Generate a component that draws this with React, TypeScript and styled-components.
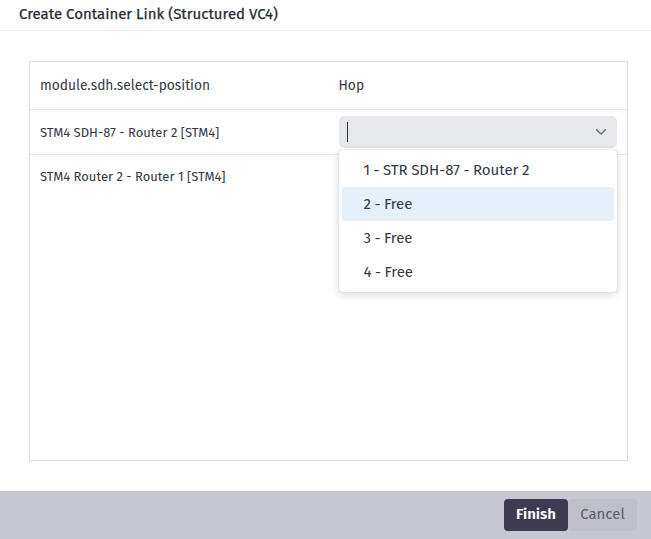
import React from 'react';
import styled, { createGlobalStyle } from 'styled-components';

const GlobalStyle = createGlobalStyle`
  html, body {
    margin: 0;
    padding: 0;
    background: #ffffff;
    font-family: "Fira Sans", "Noto Sans", "Open Sans", sans-serif;
    color: #2e3240;
  }
  * { box-sizing: border-box; }
`;

const Dialog = styled.div`
  width: 651px;
  height: 539px;
  display: flex;
  flex-direction: column;
  background: #fff;
`;

const Header = styled.div`
  height: 31px;
  padding: 0 0 0 19px;
  display: flex;
  align-items: center;
  border-bottom: 1px solid #e9e9ef;
`;

const Title = styled.h1`
  margin: 0 0 3px;
  font-size: 15px;
  font-weight: 400;
  color: #262a36;
  -webkit-text-stroke: 0.25px #262a36;
`;

const Body = styled.div`
  flex: 1;
  padding: 30px 23px 30px 29px;
  display: flex;
`;

const Table = styled.div`
  flex: 1;
  border: 1px solid #dcdde2;
  display: flex;
  flex-direction: column;
`;

const Row = styled.div<{ $height: number; $divider?: boolean }>`
  display: grid;
  grid-template-columns: 1fr 1fr;
  height: ${p => p.$height}px;
  border-bottom: ${p => (p.$divider ? '1px solid #e6e7eb' : 'none')};
`;

const Cell = styled.div<{ $size: number; $top?: number }>`
  padding: ${p => (p.$top !== undefined ? `${p.$top}px 10px 0` : '0 10px')};
  display: flex;
  align-items: ${p => (p.$top !== undefined ? 'flex-start' : 'center')};
  font-size: ${p => p.$size}px;
  color: #343846;
  position: relative;
`;

const SelectBox = styled.div`
  width: 100%;
  height: 32px;
  border-radius: 5px;
  background: #e6e8ec;
  display: flex;
  align-items: center;
  justify-content: space-between;
  padding: 0 10px 0 8px;
`;

const Caret = styled.span`
  width: 1px;
  height: 20px;
  background: #2b2f3b;
`;

const Menu = styled.div`
  position: absolute;
  top: 40px;
  left: 10px;
  right: 10px;
  background: #fff;
  border-radius: 4px;
  padding: 3px;
  box-shadow: 0 2px 8px rgba(40, 44, 60, 0.2), 0 0 1px rgba(40, 44, 60, 0.25);
  z-index: 2;
`;

const Option = styled.div<{ $active?: boolean }>`
  height: 34px;
  display: flex;
  align-items: center;
  padding-left: 22px;
  border-radius: 3px;
  font-size: 15px;
  word-spacing: -0.5px;
  color: #343846;
  background: ${p => (p.$active ? '#e6f0fb' : 'transparent')};
`;

const Footer = styled.div`
  height: 48px;
  background: #c7c7cf;
  display: flex;
  align-items: center;
  justify-content: flex-end;
  padding-right: 14px;
`;

const Button = styled.button<{ $primary?: boolean }>`
  height: 32px;
  border: none;
  border-radius: 4px;
  font-family: inherit;
  font-size: 15px;
  padding: 0 0 2px;
  cursor: pointer;
  background: ${p => (p.$primary ? '#3d3a52' : '#bfbfc8')};
  color: ${p => (p.$primary ? '#ffffff' : '#5d5d70')};
  font-weight: ${p => (p.$primary ? 600 : 400)};
  width: ${p => (p.$primary ? 64 : 69)}px;
`;

const Chevron = () => (
  <svg width="12" height="8" viewBox="0 0 12 8" fill="none">
    <path d="M1.5 1.8 L6 6 L10.5 1.8" stroke="#6b6f7c" strokeWidth="1.5" strokeLinecap="round" strokeLinejoin="round" />
  </svg>
);

const options = ['1 - STR SDH-87 - Router 2', '2 - Free', '3 - Free', '4 - Free'];

export default function App() {
  return (
    <Dialog>
      <GlobalStyle />
      <Header>
        <Title>Create Container Link (Structured VC4)</Title>
      </Header>
      <Body>
        <Table>
          <Row $height={48} $divider>
            <Cell $size={13.75}>module.sdh.select-position</Cell>
            <Cell $size={13.75}>Hop</Cell>
          </Row>
          <Row $height={45} $divider>
            <Cell $size={13}>STM4 SDH-87 - Router 2 [STM4]</Cell>
            <Cell $size={13}>
              <SelectBox>
                <Caret />
                <Chevron />
              </SelectBox>
              <Menu>
                {options.map((o, i) => (
                  <Option key={o} $active={i === 1}>
                    {o}
                  </Option>
                ))}
              </Menu>
            </Cell>
          </Row>
          <Row $height={40}>
            <Cell $size={13} $top={14}>STM4 Router 2 - Router 1 [STM4]</Cell>
            <Cell $size={13} />
          </Row>
        </Table>
      </Body>
      <Footer>
        <Button $primary>Finish</Button>
        <Button>Cancel</Button>
      </Footer>
    </Dialog>
  );
}
